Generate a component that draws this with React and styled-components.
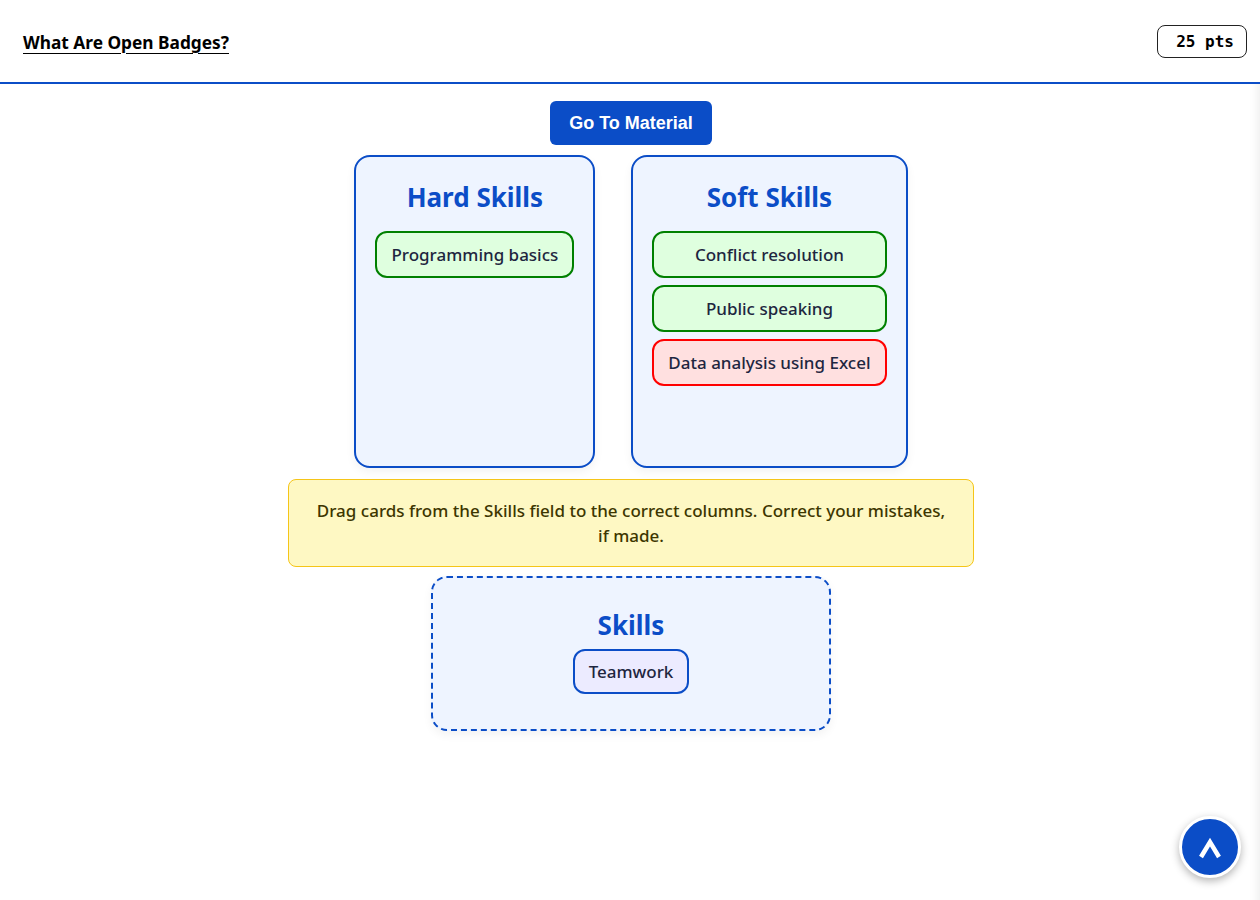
import React from "react";
import styled, { createGlobalStyle } from "styled-components";

const GlobalStyle = createGlobalStyle`
  html, body {
    margin: 0;
    padding: 0;
    background: #fff;
  }
  body {
    font-family: "Noto Sans", "Open Sans", sans-serif;
  }
`;

const Page = styled.div`
  min-height: 900px;
  display: flex;
  flex-direction: column;
`;

const Header = styled.header`
  height: 82px;
  display: flex;
  align-items: center;
  justify-content: space-between;
  padding: 0 13px 0 23px;
  border-bottom: 2px solid #0b4dc7;
`;

const Title = styled.h1`
  margin: 2px 0 0;
  font-size: 17.3px;
  font-weight: 700;
  color: #000;
  text-decoration: underline;
  text-underline-offset: 4px;
  text-decoration-thickness: 1px;
`;

const Points = styled.div`
  font-family: "DejaVu Sans Mono", "Liberation Mono", monospace;
  font-weight: 700;
  font-size: 16px;
  line-height: 19px;
  padding: 6px 12px 6px 18px;
  border: 1px solid #222;
  border-radius: 8px;
  color: #000;
`;

const Main = styled.main`
  flex: 1;
  display: flex;
  flex-direction: column;
  align-items: center;
  padding: 17px 0 40px 2px;
  box-shadow: inset -12px 0 10px -10px rgba(0, 0, 0, 0.08);
`;

const MaterialButton = styled.button`
  height: 44px;
  padding: 0 19px;
  border: none;
  border-radius: 6px;
  background: #0b4dc7;
  color: #fff;
  font-family: "Liberation Sans", Arial, sans-serif;
  font-weight: 700;
  font-size: 18px;
  cursor: pointer;
`;

const Columns = styled.div`
  display: flex;
  gap: 36px;
  margin-top: 10px;
`;

const Column = styled.section`
  min-height: 273px;
  padding: 18px 19px;
  border: 2px solid #0b4dc7;
  border-radius: 16px;
  background: #eef4ff;
  box-shadow: 0 4px 10px rgba(0, 0, 0, 0.05);
  display: flex;
  flex-direction: column;
  align-items: stretch;
  gap: 7px;
`;

const ColumnTitle = styled.h2`
  margin: 6px 0 11px;
  text-align: center;
  font-size: 26px;
  line-height: 32px;
  font-weight: 700;
  color: #0b4dc7;
`;

const tones = {
  correct: { border: "#008000", bg: "#dfffdf" },
  wrong: { border: "#ff0000", bg: "#ffe0e0" },
  idle: { border: "#0b4dc7", bg: "#ecebff" },
};

const Card = styled.div`
  padding: ${(p) => (p.$tone === "idle" ? "9px 14px" : "10px 14px")};
  border: 2px solid ${(p) => tones[p.$tone].border};
  background: ${(p) => tones[p.$tone].bg};
  border-radius: 12px;
  text-align: center;
  font-size: 17px;
  line-height: 23px;
  font-weight: 500;
  color: #1e2640;
  white-space: nowrap;
  cursor: grab;
`;

const Hint = styled.div`
  width: 636px;
  margin-top: 11px;
  padding: 18px 24px;
  background: #fef8c3;
  border: 1px solid #f5c518;
  border-radius: 8px;
  text-align: center;
  font-size: 17px;
  line-height: 25px;
  font-weight: 500;
  color: #3d3600;
`;

const Pool = styled.section`
  width: 396px;
  margin-top: 9px;
  padding: 31px 0 35px;
  border: 2px dashed #0b4dc7;
  border-radius: 16px;
  background: #eef4ff;
  box-shadow: 0 4px 10px rgba(0, 0, 0, 0.05);
  display: flex;
  flex-direction: column;
  align-items: center;
`;

const PoolTitle = styled(ColumnTitle)`
  margin: 0 0 8px;
`;

const ScrollTop = styled.button`
  position: fixed;
  right: 19px;
  bottom: 22px;
  width: 62px;
  height: 62px;
  border-radius: 50%;
  border: 3px solid #fff;
  background: #0b4dc7;
  box-shadow: 0 3px 8px rgba(0, 0, 0, 0.3);
  display: flex;
  align-items: center;
  justify-content: center;
  padding: 0;
  cursor: pointer;
`;

export default function App() {
  return (
    <Page>
      <GlobalStyle />
      <Header>
        <Title>What Are Open Badges?</Title>
        <Points>25 pts</Points>
      </Header>
      <Main>
        <MaterialButton>Go To Material</MaterialButton>
        <Columns>
          <Column>
            <ColumnTitle>Hard Skills</ColumnTitle>
            <Card $tone="correct">Programming basics</Card>
          </Column>
          <Column>
            <ColumnTitle>Soft Skills</ColumnTitle>
            <Card $tone="correct">Conflict resolution</Card>
            <Card $tone="correct">Public speaking</Card>
            <Card $tone="wrong">Data analysis using Excel</Card>
          </Column>
        </Columns>
        <Hint>
          Drag cards from the Skills field to the correct columns. Correct your
          mistakes, if made.
        </Hint>
        <Pool>
          <PoolTitle>Skills</PoolTitle>
          <Card $tone="idle">Teamwork</Card>
        </Pool>
      </Main>
      <ScrollTop aria-label="Scroll to top">
        <svg width="28" height="28" viewBox="0 0 28 28">
          <path
            d="M5 24 L14 9 L23 24"
            fill="none"
            stroke="#fff"
            strokeWidth="4.5"
            strokeLinejoin="miter"
          />
        </svg>
      </ScrollTop>
    </Page>
  );
}
